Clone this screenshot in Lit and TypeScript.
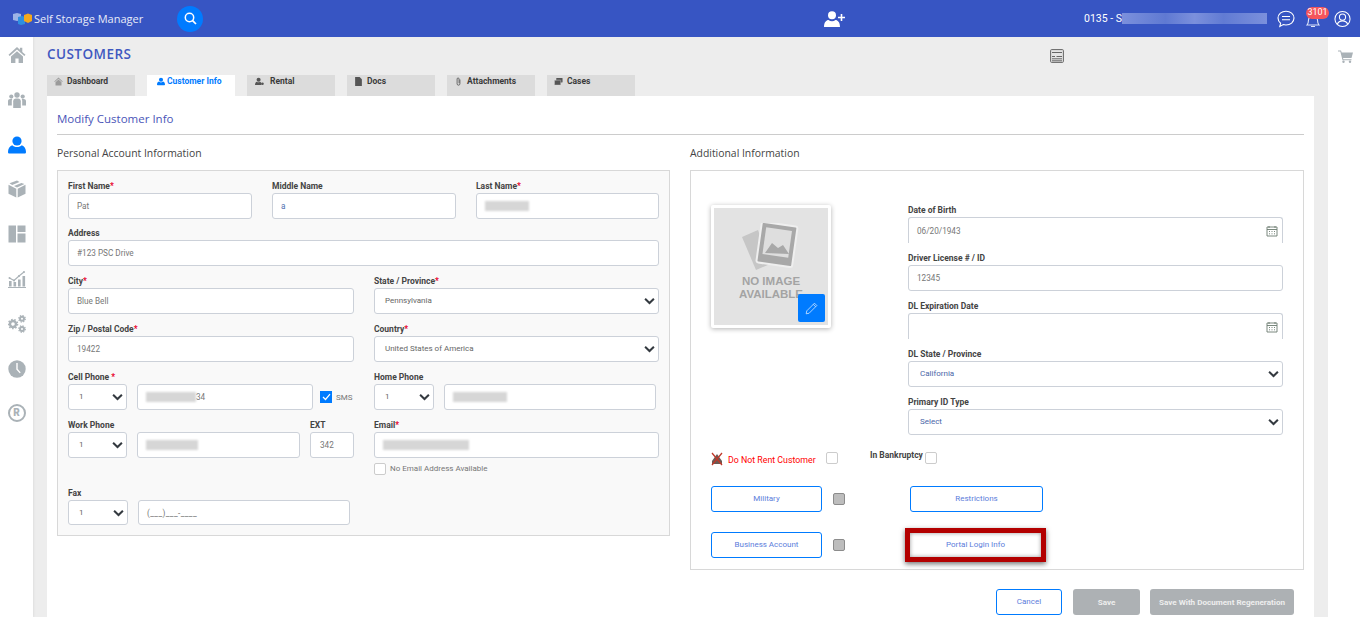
import { LitElement, html, css, svg } from "lit";
import { customElement } from "lit/decorators.js";

const chev = html`<svg class="chev" viewBox="0 0 12 8" width="11" height="8"><path d="M1.2 1.5 6 6.2l4.8-4.7" fill="none" stroke="#343a40" stroke-width="2.2"/></svg>`;
const cal = html`<svg class="cal" viewBox="0 0 12 12" width="12" height="12"><path d="M1 2h10v9H1z M1 4.500h10 M3 1v2 M9 1v2 M3 6.500h1 M5.500 6.500h1 M8 6.500h1 M3 8.800h1 M5.500 8.800h1 M8 8.800h1" fill="none" stroke="#6b7c6f" stroke-width=".9"/></svg>`;

const lbl = (t: string, req = false) => html`<div class="lbl">${t}${req ? html`<span class="req">*</span>` : ""}</div>`;
const blur = (w: number) => html`<span class="blur" style="width:${w}px"></span>`;

const navIcons = [
  svg`<path d="M9 1 0.5 8.8l1.2 1.2L9 3.4l7.3 6.6 1.2-1.2-3.2-2.900V1.800h-2.400v1.900zM3 10.600V17h4.400v-4.600h3.200V17H15v-6.400L9 5.200z" fill="#aab2b7"/>`,
  svg`<g fill="#aab2b7"><circle cx="9" cy="4" r="2.700"/><circle cx="3.300" cy="5.600" r="2.100"/><circle cx="14.700" cy="5.600" r="2.100"/><path d="M5.200 17V10.200C5.200 8.400 6.400 7.400 8 7.400h2c1.600 0 2.800 1 2.800 2.800V17z"/><path d="M0 14.500v-4.600C0 8.800 1 8 2.200 8h2.100C3.900 8.600 3.800 9.400 3.800 10.200v4.300zM18 14.500v-4.600C18 8.800 17 8 15.800 8h-2.100c.4.600.5 1.400.5 2.200v4.300z"/></g>`,
  svg`<g fill="#007bff"><circle cx="9" cy="5" r="4.600"/><path d="M1.600 17.600c-1.100 0-1.600-.7-1.600-1.700C0 12.800 1.600 10 4.200 9.200 5.300 10.400 7 11 9 11s3.700-.6 4.800-1.800C16.400 10 18 12.800 18 15.900c0 1-.5 1.700-1.600 1.700z"/></g>`,
  svg`<g fill="#aab2b7"><path d="M9 .6 1.500 3.300 4.200 5 11.500 2.100zM13.400 2.900 6 5.900 9 7.500 16.500 3.900z"/><path d="M.5 4.800 8.300 8.800V17.400L.5 13.800z"/><path d="M17.500 4.800 9.700 8.800V17.400l7.800-3.600z"/></g>`,
  svg`<g fill="#aab2b7"><rect x="0.500" y="0.500" width="7.500" height="17"/><rect x="9.500" y="0.500" width="8" height="6.500"/><rect x="9.500" y="8.500" width="8" height="9"/></g>`,
  svg`<g fill="#aab2b7"><rect x="1" y="11" width="2.600" height="5.500"/><rect x="5.500" y="12" width="2.600" height="4.500"/><rect x="10" y="9.500" width="2.600" height="7"/><rect x="14.500" y="6" width="2.600" height="10.500"/><rect x="0" y="17" width="18" height="1"/></g><path d="M1.500 8 6 10.500 11 6 16 2" fill="none" stroke="#aab2b7" stroke-width="1.100"/><g fill="#aab2b7"><circle cx="1.500" cy="8" r="1"/><circle cx="6" cy="10.500" r="1"/><circle cx="11" cy="6" r="1"/><circle cx="16" cy="2" r="1"/></g>`,
  svg`<g fill="none" stroke="#aab2b7"><circle cx="5" cy="9" r="3" stroke-width="2.400"/><circle cx="5" cy="9" r="4.600" stroke-width="1.400" stroke-dasharray="1.600 1.600"/><circle cx="14" cy="3.800" r="2" stroke-width="2"/><circle cx="14" cy="3.800" r="3.300" stroke-width="1.200" stroke-dasharray="1.300 1.300"/><circle cx="14" cy="14" r="2" stroke-width="2"/><circle cx="14" cy="14" r="3.300" stroke-width="1.200" stroke-dasharray="1.300 1.300"/></g>`,
  svg`<circle cx="9" cy="9" r="8.700" fill="#aab2b7"/><path d="M9 3v6.300l3.200 3.600" fill="none" stroke="#fff" stroke-width="1.400"/>`,
];

@customElement("app-root")
export class AppRoot extends LitElement {
  static styles = css`
    :host { display: block; width: 1360px; height: 617px; overflow: hidden; font-family: Roboto, "Liberation Sans", sans-serif; background: #ededed; }
    .top { height: 37px; background: #3755c3; display: flex; align-items: center; color: #fff; }
    .logo { margin-left: 13px; display: block; }
    .brand { margin-left: 2px; font: 500 11px "Open Sans", sans-serif; width: 109px; white-space: nowrap; color: #e8ecf8; }
    .search { margin-left: 34px; width: 26px; height: 26px; border-radius: 50%; background: #007bff; display: flex; align-items: center; justify-content: center; }
    .add { margin-left: 621px; width: 21px; display: block; }
    .acct { margin-left: 239px; width: 191px; font-size: 10.500px; display: flex; align-items: center; white-space: nowrap; }
    .hblur { width: 145px; height: 11px; background: linear-gradient(90deg, #7b90dc, #5f79d2 30%, #7b90dc 50%, #617bd3 70%, #7b90dc); filter: blur(.6px); }
    .ico { display: block; }
    .chat { margin-left: 2px; }
    .bellwrap { margin-left: 6px; width: 24px; height: 37px; position: relative; display: flex; justify-content: center; align-items: flex-end; }
    .bell { margin-bottom: 9px; }
    .badge { position: absolute; top: 7px; left: 5px; width: 23px; height: 12px; border-radius: 6px; background: #f4555c; font-size: 9px; line-height: 11px; text-align: center; color: #fff; }
    .usr { margin-left: 9px; }
    .body { display: flex; height: 580px; }
    .side { width: 33px; background: #fff; box-shadow: 1px 0 2px rgba(0,0,0,.06); display: flex; flex-direction: column; align-items: center; padding-top: 9px; gap: 26.800px; box-sizing: border-box; flex: none; }
    .side svg { display: block; }
    .rmark { width: 18px; height: 18px; border-radius: 50%; border: 2px solid #aab2b7; box-sizing: border-box; color: #aab2b7; font: 900 10px/14px Roboto, sans-serif; text-align: center; }
    .content { width: 1295px; padding: 0 14px; box-sizing: border-box; flex: none; }
    .rbar { width: 32px; background: #fff; flex: none; padding: 11px 0 0 10px; box-sizing: border-box; }
    .title { height: 38px; display: flex; align-items: center; }
    .title h1 { margin: 0 0 4px; font: 600 13.500px "Open Sans", sans-serif; color: #3f58c0; letter-spacing: .45px; width: 1003px; }
    .tabs { display: flex; gap: 12px; height: 21px; }
    .tab { width: 88px; background: #dcdcdc; font: 700 8.500px Roboto, sans-serif; color: #3a3a3a; display: flex; align-items: flex-start; gap: 4px; padding: 1px 0 0 7px; box-sizing: border-box; line-height: 9px; white-space: nowrap; }
    .tab.on { background: #fff; color: #007bff; padding-left: 10px; gap: 2px; }
    .tab.rent { padding-left: 8px; gap: 6px; }
    .tab span { margin-top: 1px; }
    .tab svg { flex: none; margin-top: 1px; }
    .panel { background: #fff; padding: 0 10px; height: 521px; }
    .mod { height: 39px; box-sizing: border-box; border-bottom: 1px solid #ccc; font: 400 11.500px/46px "Open Sans", sans-serif; color: #4a55b8; }
    .cols { display: flex; gap: 20px; align-items: flex-start; }
    .col { width: 613px; flex: none; }
    .col.r { width: 614px; }
    .head { height: 35px; box-sizing: border-box; font: 400 10.400px/36px "Open Sans", sans-serif; color: #444; }
    .box { border: 1px solid #d8d8d8; box-sizing: border-box; }
    .pbox { background: #f9f9f9; padding: 8px 10px 10px; height: 366px; }
    .rbox { background: #fff; padding: 32px 20px 0; height: 400px; }
    .row { display: grid; column-gap: 20px; margin-top: 8px; }
    .row.first { margin-top: 0; }
    .r3 { grid-template-columns: 184px 184px 183px; }
    .r1 { grid-template-columns: 591px; margin-top: 7px; }
    .r2 { grid-template-columns: 286px 285px; }
    .phone { display: flex; gap: 10px; }
    .home { width: 282px; }
    .lbl { height: 14px; font: 700 8.500px/14px Roboto, sans-serif; color: #444; white-space: nowrap; }
    .req { color: #e8002a; }
    .inp { height: 26px; box-sizing: border-box; border: 1px solid #ccd1d9; border-radius: 3px; background: #fff; font: 400 8.200px/24px Roboto, sans-serif; color: #777; padding-left: 8px; display: flex; align-items: center; white-space: nowrap; justify-content: space-between; }
    .inp.blue { color: #4f6fb0; }
    .inp.sel { padding-left: 10px; padding-right: 3px; color: #666; font-size: 8px; }
    .inp.sel.b { color: #4a66a8; padding-left: 11px; }
    .open { border-bottom: none; border-radius: 3px 3px 0 0; padding-right: 4px; }
    .blur { display: inline-block; height: 10px; background: #d6d6d6; filter: blur(1.200px); }
    .grow { flex: 1; justify-content: flex-start; }
    .s59 { width: 59px; flex: none; }
    .s60 { width: 60px; flex: none; }
    .cell { flex: 0 0 176px; }
    .sms { display: flex; align-items: center; gap: 4px; font: 400 8px Roboto, sans-serif; color: #777; margin-left: -3px; width: 34px; }
    .ck { width: 12px; height: 12px; background: #007bff; display: flex; align-items: center; justify-content: center; flex: none; }
    .cb { width: 12px; height: 12px; border: 1px solid #ccc; border-radius: 2px; background: #fff; box-sizing: border-box; flex: none; }
    .cb.g { background: #bdbdbd; border-color: #8c8c8c; }
    .noemail { display: flex; align-items: center; gap: 4px; margin-top: 5px; font: 400 8px/12px Roboto, sans-serif; color: #777; }
    .wl { flex: 1; }
    .wx { width: 44px; flex: none; }
    .ext { padding-left: 9px; justify-content: flex-start; }
    .fax { width: 282px; margin-top: 11px; }
    .faxrow { display: flex; gap: 10px; height: 25px; }
    .faxrow .inp { height: 25px; }
    .mask { letter-spacing: .4px; }
    .top2 { display: flex; gap: 77px; align-items: flex-start; }
    .photo { width: 120px; height: 123px; margin-top: 2px; background: #fff; box-shadow: 0 1px 5px rgba(0,0,0,.3); border-radius: 2px; padding: 3px; box-sizing: border-box; flex: none; position: relative; }
    .pimg { width: 114px; height: 117px; background: #e3e3e3; display: flex; flex-direction: column; align-items: center; color: #a3a3a3; font: 700 11.500px/13px "Liberation Sans", sans-serif; text-align: center; box-sizing: border-box; padding-top: 15px; }
    .pimg svg { margin-bottom: 4px; }
    .edit { position: absolute; right: 6px; bottom: 6px; width: 27px; height: 28px; border-radius: 2px; background: #007bff; display: flex; align-items: center; justify-content: center; }
    .rf { width: 375px; flex: none; }
    .rowa { display: flex; align-items: flex-start; margin-top: 17px; height: 14px; }
    .dnr { font: 400 8.800px/16px Roboto, sans-serif; color: #f00; margin-left: 5px; width: 98px; white-space: nowrap; }
    .bk { font: 700 8.500px/6px Roboto, sans-serif; color: #444; margin-left: 32px; width: 55px; white-space: nowrap; }
    .rowb { display: flex; align-items: center; margin-top: 20px; }
    .btn { height: 26px; box-sizing: border-box; border: 1px solid #007bff; border-radius: 3px; background: #fff; color: #5b7ddb; font: 400 8px/24px Roboto, sans-serif; text-align: center; position: relative; flex: none; }
    .b111 { width: 111px; }
    .b133 { width: 133px; margin-left: 65px; }
    .b131 { width: 131px; margin-left: 65px; border: none; line-height: 26px; }
    .hl { position: absolute; inset: -4px -5px; border: 5px solid #b30000; box-shadow: 0 2px 5px rgba(0,0,0,.55), inset 0 0 4px rgba(0,0,0,.4); }
    .rowb .cb { margin-left: 11px; }
    .foot { display: flex; justify-content: flex-end; gap: 11px; padding-right: 10px; margin-top: 19px; }
    .foot .btn { width: 66px; }
    .foot .gray { background: #adb1b4; border: none; color: #eee; font-weight: 700; font-size: 8.100px; line-height: 26px; }
    .foot .save { width: 67px; }
    .foot .regen { width: 144px; margin-left: -1px; }
    .cal { flex: none; }
  `;

  render() {
    return html`
      <header class="top">
        <svg class="logo" width="19" height="12" viewBox="0 0 19 12"><path d="M0 1l4-1 4 1v6L4 8 0 7z" fill="#9db4e6"/><path d="M5 4l4-1 3 1v7l-4 1-3-1z" fill="#2f8fe0"/><path d="M11 2l4-1.500L19 2v6l-4 2-4-2z" fill="#f5a81c"/></svg>
        <div class="brand">Self Storage Manager</div>
        <div class="search"><svg width="13" height="13" viewBox="0 0 13 13"><circle cx="5.500" cy="5.500" r="4.200" fill="none" stroke="#fff" stroke-width="1.500"/><path d="M8.600 8.600 12 12" stroke="#fff" stroke-width="1.700"/></svg></div>
        <svg class="add" height="16" viewBox="0 0 21 16"><circle cx="8" cy="4.200" r="4" fill="#fff"/><path d="M0 16c0-5 2.500-7 4.500-7 1 .8 2.200 1.200 3.500 1.200s2.500-.4 3.500-1.200c2 0 4.500 2 4.500 7z" fill="#fff"/><path d="M17.500 3v7M14 6.500h7" stroke="#fff" stroke-width="1.600"/></svg>
        <div class="acct">0135 - S<span class="hblur"></span></div>
        <svg class="ico chat" width="18" height="18" viewBox="0 0 18 18" fill="none" stroke="#fff" stroke-width="1.100"><path d="M9 1.200c4.400 0 8 2.900 8 6.900s-3.600 6.900-8 6.900c-1 0-1.900-.1-2.700-.4L2.800 16.500l.8-3.200C2 12 1 10.200 1 8.100 1 4.100 4.600 1.200 9 1.200z"/><path d="M5 6.500h8M5 9.700h8"/></svg>
        <div class="bellwrap">
          <svg class="bell" width="14" height="14" viewBox="0 0 14 14" fill="none" stroke="#dfe6fa" stroke-width="1.100"><path d="M1 11c1.200-1.500 1.500-3 1.500-5S4.500 2 7 2s4.500 2 4.500 4 .3 3.500 1.500 5zM5 12.500h4"/></svg>
          <div class="badge">3101</div>
        </div>
        <svg class="ico usr" width="17" height="18" viewBox="0 0 18 18" fill="none" stroke="#fff" stroke-width="1.100"><circle cx="9" cy="9" r="8"/><circle cx="9" cy="7" r="3.300"/><path d="M3.500 14.500C4.500 12 6.500 11 9 11s4.500 1 5.500 3.500"/></svg>
      </header>
      <div class="body">
        <nav class="side">
          ${navIcons.map((p) => html`<svg width="18" height="18" viewBox="0 0 18 18">${p}</svg>`)}
          <div class="rmark">R</div>
        </nav>
        <main class="content">
          <div class="title">
            <h1>CUSTOMERS</h1>
            <svg width="14" height="14" viewBox="0 0 14 14"><rect x=".6" y=".6" width="12.800" height="12.800" rx="1" fill="#e4e4e4" stroke="#666" stroke-width="1"/><path d="M2 3.500h10M2 7.500h3M6.500 7.500h5.500M2 9.800h10M2 11.800h10" stroke="#666" stroke-width="1"/></svg>
          </div>
          <div class="tabs">
            <div class="tab"><svg width="9" height="9" viewBox="0 0 18 18"><path d="M9 1 0.500 8.800l1.200 1.200L9 3.400l7.300 6.600 1.200-1.200L9 1zM3 10.600V17h12v-6.400L9 5.200z" fill="#9a9a9a"/></svg><span>Dashboard</span></div>
            <div class="tab on"><svg width="8" height="9" viewBox="0 0 18 18"><circle cx="9" cy="5" r="4.600" fill="#007bff"/><path d="M1.600 17.600C.5 17.600 0 16.900 0 15.900 0 12.800 1.600 10 4.200 9.200 5.300 10.400 7 11 9 11s3.700-.6 4.800-1.800c2.600.8 4.200 3.600 4.200 6.700 0 1-.5 1.700-1.600 1.700z" fill="#007bff"/></svg><span>Customer Info</span></div>
            <div class="tab rent"><svg width="9" height="9" viewBox="0 0 20 18"><circle cx="8" cy="5" r="4.500" fill="#555"/><path d="M0 17c0-4 2-7 4-7.500 2 1.500 5 1.500 7 0 1.500.5 2.500 2 3 3.500V17z" fill="#555"/><circle cx="16.500" cy="14" r="3" fill="#555"/></svg><span>Rental</span></div>
            <div class="tab"><svg width="9" height="9" viewBox="0 0 14 16"><path d="M1 0h8l4 4v12H1z" fill="#555"/></svg><span>Docs</span></div>
            <div class="tab"><svg width="9" height="9" viewBox="0 0 10 16" fill="none" stroke="#555" stroke-width="1.500"><path d="M7.500 4.500V12a2.500 2.500 0 0 1-5 0V3.500a1.700 1.700 0 0 1 3.500 0V11"/></svg><span>Attachments</span></div>
            <div class="tab"><svg width="9" height="9" viewBox="0 0 20 18" fill="#555"><rect x="5" y="1" width="14" height="10" rx="1"/><rect x="1" y="6" width="14" height="11" rx="1" stroke="#dcdcdc"/></svg><span>Cases</span></div>
          </div>
          <section class="panel">
            <div class="mod">Modify Customer Info</div>
            <div class="cols">
              <div class="col">
                <div class="head">Personal Account Information</div>
                <div class="box pbox">
                  <div class="row r3 first">
                    <div>${lbl("First Name", true)}<div class="inp">Pat</div></div>
                    <div>${lbl("Middle Name")}<div class="inp blue">a</div></div>
                    <div>${lbl("Last Name", true)}<div class="inp grow">${blur(44)}</div></div>
                  </div>
                  <div class="row r1"><div>${lbl("Address")}<div class="inp">#123 PSC Drive</div></div></div>
                  <div class="row r2">
                    <div>${lbl("City", true)}<div class="inp">Blue Bell</div></div>
                    <div>${lbl("State / Province", true)}<div class="inp sel">Pennsylvania ${chev}</div></div>
                  </div>
                  <div class="row r2">
                    <div>${lbl("Zip / Postal Code", true)}<div class="inp">19422</div></div>
                    <div>${lbl("Country", true)}<div class="inp sel">United States of America ${chev}</div></div>
                  </div>
                  <div class="row r2">
                    <div>${lbl("Cell Phone ", true)}<div class="phone">
                      <div class="inp sel s59">1 ${chev}</div>
                      <div class="inp grow cell">${blur(50)}<span>34</span></div>
                      <div class="sms"><span class="ck"><svg width="9" height="8" viewBox="0 0 9 8"><path d="M1 4l2.500 2.500L8 1.200" fill="none" stroke="#fff" stroke-width="1.200"/></svg></span>SMS</div>
                    </div></div>
                    <div>${lbl("Home Phone")}<div class="phone home">
                      <div class="inp sel s60">1 ${chev}</div>
                      <div class="inp grow">${blur(54)}</div>
                    </div></div>
                  </div>
                  <div class="row r2">
                    <div class="phone">
                      <div class="wl">${lbl("Work Phone")}<div class="phone">
                        <div class="inp sel s59">1 ${chev}</div>
                        <div class="inp grow">${blur(52)}</div>
                      </div></div>
                      <div class="wx">${lbl("EXT")}<div class="inp ext">342</div></div>
                    </div>
                    <div>${lbl("Email", true)}<div class="inp grow">${blur(86)}</div>
                      <div class="noemail"><span class="cb"></span>No Email Address Available</div></div>
                  </div>
                  <div class="fax">${lbl("Fax")}
                    <div class="faxrow">
                      <div class="inp sel s60">1 ${chev}</div>
                      <div class="inp grow mask">(___)___-____</div>
                    </div>
                  </div>
                </div>
              </div>
              <div class="col r">
                <div class="head">Additional Information</div>
                <div class="box rbox">
                  <div class="top2">
                    <div class="photo">
                      <div class="pimg">
                        <svg width="58" height="48" viewBox="0 0 58 48"><path d="M0 14 16 7l12 34-14 6z" fill="#c6c6c6"/><rect x="17" y="1" width="36" height="41" rx="2" fill="#a8a8a8" stroke="#efefef" stroke-width="2" transform="rotate(8 35 21)"/><rect x="22" y="6" width="26" height="27" fill="#dedede" transform="rotate(8 35 21)"/><path d="M23 30l7-10 6 5 5-3 6 9z" fill="#a8a8a8"/></svg>
                        <div>NO IMAGE<br>AVAILABLE</div>
                      </div>
                      <div class="edit"><svg width="13" height="13" viewBox="0 0 11 11" fill="none" stroke="#cfe4ff" stroke-width=".7"><path d="M1 10l.5-2.500L8 1l2 2-6.500 6.500zM7 2l2 2"/></svg></div>
                    </div>
                    <div class="rf">
                      <div class="row first">${lbl("Date of Birth")}<div class="inp open">06/20/1943 ${cal}</div></div>
                      <div class="row">${lbl("Driver License # / ID")}<div class="inp">12345</div></div>
                      <div class="row">${lbl("DL Expiration Date")}<div class="inp open"><span></span>${cal}</div></div>
                      <div class="row">${lbl("DL State / Province")}<div class="inp sel b">California ${chev}</div></div>
                      <div class="row">${lbl("Primary ID Type")}<div class="inp sel b">Select ${chev}</div></div>
                    </div>
                  </div>
                  <div class="rowa">
                    <svg width="12" height="14" viewBox="0 0 12 14"><path d="M6 2 1 9v3h10V9z" fill="#6b5a54"/><path d="M1 1l10 12M11 1 1 13" stroke="#c0392b" stroke-width="1.300"/></svg>
                    <div class="dnr">Do Not Rent Customer</div>
                    <span class="cb"></span>
                    <div class="bk">In Bankruptcy</div>
                    <span class="cb"></span>
                  </div>
                  <div class="rowb"><div class="btn b111">Military</div><span class="cb g"></span><div class="btn b133">Restrictions</div></div>
                  <div class="rowb"><div class="btn b111">Business Account</div><span class="cb g"></span><div class="btn b131">Portal Login Info<span class="hl"></span></div></div>
                </div>
              </div>
            </div>
            <div class="foot">
              <div class="btn">Cancel</div>
              <div class="btn gray save">Save</div>
              <div class="btn gray regen">Save With Document Regeneration</div>
            </div>
          </section>
        </main>
        <aside class="rbar"><svg width="15" height="13" viewBox="0 0 15 13"><path d="M0 .5h3l.7 2H15l-1.500 5.500H5l.4 1.300H13.500v1H4.500L2.300 1.500H0z" fill="#aab2b7"/><circle cx="5.500" cy="11.800" r="1.200" fill="#aab2b7"/><circle cx="12" cy="11.800" r="1.200" fill="#aab2b7"/></svg></aside>
      </div>
    `;
  }
}
